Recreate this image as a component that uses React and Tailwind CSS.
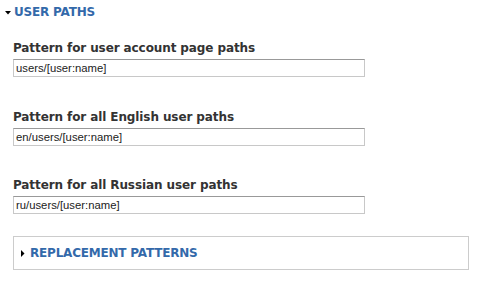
export default function App() {
  const fields = [
    { label: "Pattern for user account page paths", value: "users/[user:name]", mt: "mt-[16px]" },
    { label: "Pattern for all English user paths", value: "en/users/[user:name]", mt: "mt-[32px]" },
    { label: "Pattern for all Russian user paths", value: "ru/users/[user:name]", mt: "mt-[31px]" },
  ];
  return (
    <div className="w-[478px] h-[282px] bg-white overflow-hidden" style={{ fontFamily: '"DejaVu Sans", Verdana, sans-serif' }}>
      <div className="flex items-center pl-[5px] h-[24px]">
        <svg width="6" height="4" viewBox="0 0 6 4" className="mr-[3px] mt-[1px]">
          <polygon points="0,0 6,0 3,3.5" fill="#000" />
        </svg>
        <span className="text-[12px] font-bold leading-[16px] text-[#3369aa] uppercase tracking-[-0.2px]">User paths</span>
      </div>
      <div className="flex flex-col pl-[13px]">
        {fields.map((f, i) => (
          <div key={i} className={f.mt}>
            <div className="text-[12px] font-bold leading-[16px] text-[#333] tracking-[-0.1px]">{f.label}</div>
            <div className="mt-[3px] w-[352px] h-[18px] border border-[#c8c8c8] border-t-[#999] flex items-center pl-[2px] text-[11.3px] text-[#222]" style={{ fontFamily: '"Liberation Sans", Arial, sans-serif' }}>
              {f.value}
            </div>
          </div>
        ))}
        <div className="mt-[22px] w-[456px] h-[34px] border border-[#ccc] flex items-center pl-[7px]">
          <svg width="4" height="7" viewBox="0 0 4 7" className="mr-[5px]">
            <polygon points="0,0 3.5,3.5 0,7" fill="#000" />
          </svg>
          <span className="text-[12px] font-bold leading-[16px] text-[#3369aa] uppercase tracking-[-0.2px]">Replacement patterns</span>
        </div>
      </div>
    </div>
  );
}
